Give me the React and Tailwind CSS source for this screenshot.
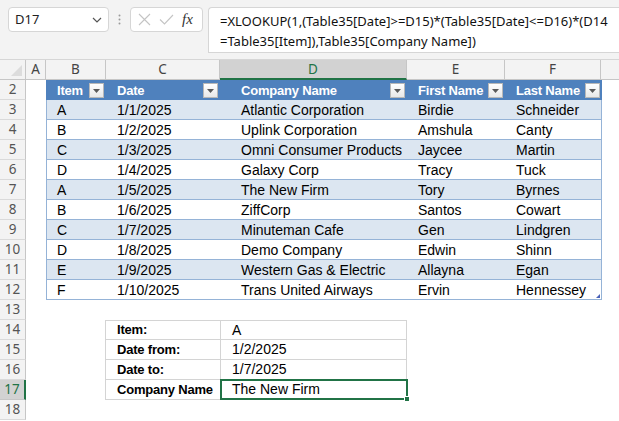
import React from 'react'

const cols = [
  { key: 'A', w: 'w-[20px]' },
  { key: 'B', w: 'w-[60px]' },
  { key: 'C', w: 'w-[114px]' },
  { key: 'D', w: 'w-[187px]' },
  { key: 'E', w: 'w-[98px]' },
  { key: 'F', w: 'w-[96px]' },
]

const data = [
  ['A', '1/1/2025', 'Atlantic Corporation', 'Birdie', 'Schneider'],
  ['B', '1/2/2025', 'Uplink Corporation', 'Amshula', 'Canty'],
  ['C', '1/3/2025', 'Omni Consumer Products', 'Jaycee', 'Martin'],
  ['D', '1/4/2025', 'Galaxy Corp', 'Tracy', 'Tuck'],
  ['A', '1/5/2025', 'The New Firm', 'Tory', 'Byrnes'],
  ['B', '1/6/2025', 'ZiffCorp', 'Santos', 'Cowart'],
  ['C', '1/7/2025', 'Minuteman Cafe', 'Gen', 'Lindgren'],
  ['D', '1/8/2025', 'Demo Company', 'Edwin', 'Shinn'],
  ['E', '1/9/2025', 'Western Gas & Electric', 'Allayna', 'Egan'],
  ['F', '1/10/2025', 'Trans United Airways', 'Ervin', 'Hennessey'],
]

const lookup = [
  ['Item:', 'A'],
  ['Date from:', '1/2/2025'],
  ['Date to:', '1/7/2025'],
  ['Company Name', 'The New Firm'],
]

const FilterBtn = () => (
  <span className="absolute right-[2px] top-[3px] flex h-[15px] w-[15px] items-center justify-center border border-[#b8b8b8] bg-gradient-to-b from-white to-[#e8e8e8]">
    <svg width="7" height="4" viewBox="0 0 7 4"><path d="M0 0h7L3.5 4z" fill="#5a5a5a" /></svg>
  </span>
)

const RowHead = ({ n, active }) => (
  <div
    className={
      'flex h-[20px] w-[26px] shrink-0 items-center justify-center border-b border-r text-[13.5px] ' +
      (active
        ? 'border-b-[#c6c6c6] border-r-[#217346] border-r-2 bg-[#d2d2d2] text-[#217346]'
        : 'border-b-[#dadada] border-r-[#c6c6c6] bg-[#f3f3f3] text-[#555]')
    }
    style={{ fontFamily: '"Noto Sans", sans-serif' }}
  >
    {n}
  </div>
)

export default function App() {
  const cellFont = { fontFamily: '"Liberation Sans", Arial, sans-serif' }
  return (
    <div className="h-[421px] w-[619px] overflow-hidden bg-white text-black" style={cellFont}>
      {/* formula bar */}
      <div className="flex h-[60px] items-start gap-0 border-b border-[#d6d6d6] bg-[#f3f3f3] pt-[7px]">
        <div
          className="ml-[8px] flex h-[25px] w-[101px] items-center justify-between rounded-[4px] border border-[#d6d6d6] bg-white pl-[6px] pr-[6px] text-[13px] text-[#222]"
          style={{ fontFamily: '"Noto Sans", sans-serif' }}
        >
          <span>D17</span>
          <svg width="10" height="6" viewBox="0 0 10 6"><path d="M1 1l4 4 4-4" stroke="#555" strokeWidth="1.2" fill="none" /></svg>
        </div>
        <div className="flex h-[25px] w-[21px] items-center justify-center">
          <svg width="3" height="11" viewBox="0 0 3 11"><circle cx="1.5" cy="1.5" r="1" fill="#9a9a9a" /><circle cx="1.5" cy="5.5" r="1" fill="#9a9a9a" /><circle cx="1.5" cy="9.5" r="1" fill="#9a9a9a" /></svg>
        </div>
        <div className="flex h-[25px] w-[73px] items-center gap-[8px] rounded-[4px] border border-[#d6d6d6] bg-white pl-[7px]">
          <svg width="13" height="13" viewBox="0 0 13 13"><path d="M1 1l11 11M12 1L1 12" stroke="#c4c4c4" strokeWidth="1.1" /></svg>
          <svg width="15" height="11" viewBox="0 0 15 11"><path d="M1 5.5l4.5 4.5L14 1" stroke="#c4c4c4" strokeWidth="1.1" fill="none" /></svg>
          <span className="text-[15px] italic text-[#333]" style={{ fontFamily: '"Liberation Serif", serif' }}>fx</span>
        </div>
        <div
          className="ml-[5px] h-[46px] flex-1 rounded-tl-[4px] border border-r-0 border-[#d6d6d6] bg-white pl-[11px] pt-[3px] text-[13px] leading-[20px] text-[#111]"
          style={{ fontFamily: '"Noto Sans", sans-serif' }}
        >
          <div className="whitespace-nowrap">=XLOOKUP(1,(Table35[Date]&gt;=D15)*(Table35[Date]&lt;=D16)*(D14</div>
          <div className="whitespace-nowrap">=Table35[Item]),Table35[Company Name])</div>
        </div>
      </div>

      {/* column headers */}
      <div className="flex h-[20px]" style={{ fontFamily: '"Noto Sans", sans-serif' }}>
        <div className="relative h-[20px] w-[26px] shrink-0 border-b border-r border-[#c6c6c6] bg-[#f3f3f3]">
          <svg className="absolute bottom-[3px] right-[3px]" width="11" height="11" viewBox="0 0 11 11"><path d="M11 0v11H0z" fill="#dcdcdc" /></svg>
        </div>
        {cols.map((c) => (
          <div
            key={c.key}
            className={
              c.w +
              ' flex h-[20px] shrink-0 items-center justify-center border-r text-[13.5px] ' +
              (c.key === 'D'
                ? 'border-b-2 border-b-[#217346] border-r-[#c6c6c6] bg-[#d2d2d2] text-[#217346]'
                : 'border-b border-[#c6c6c6] bg-[#f3f3f3] text-[#444]')
            }
          >
            {c.key}
          </div>
        ))}
        <div className="h-[20px] flex-1 border-b border-[#c6c6c6] bg-[#f3f3f3]" />
      </div>

      {/* row 2: table header */}
      <div className="flex h-[20px]">
        <RowHead n={2} />
        <div className="w-[20px] shrink-0" />
        <div className="flex w-[556px] shrink-0 bg-[#4f81bd] text-[13px] font-bold tracking-[-0.2px] text-white">
          <div className="relative w-[60px] pl-[11px] leading-[21px]">Item<FilterBtn /></div>
          <div className="relative w-[114px] pl-[11px] leading-[21px]">Date<FilterBtn /></div>
          <div className="relative w-[187px] pl-[21px] leading-[21px]">Company Name<FilterBtn /></div>
          <div className="relative w-[98px] pl-[11px] leading-[21px]">First Name<FilterBtn /></div>
          <div className="relative w-[97px] pl-[11px] leading-[21px]">Last Name<FilterBtn /></div>
        </div>
      </div>

      {/* data rows */}
      {data.map((r, i) => (
        <div key={i} className="flex h-[20px]">
          <RowHead n={i + 3} />
          <div className="w-[20px] shrink-0" />
          <div
            className={
              'relative flex h-[20px] w-[556px] shrink-0 border-r border-[#95b3d7] text-[14px] leading-[20px] ' +
              (i % 2 === 0 ? 'bg-[#dce6f1] ' : 'bg-white ') +
              'border-b border-b-[#95b3d7] border-l'
            }
          >
            <div className="w-[59px] shrink-0 pl-[10px]">{r[0]}</div>
            <div className="w-[114px] shrink-0 pl-[11px]">{r[1]}</div>
            <div className="w-[187px] shrink-0 pl-[21px]">{r[2]}</div>
            <div className="w-[98px] shrink-0 pl-[11px]">{r[3]}</div>
            <div className="w-[96px] shrink-0 pl-[11px]">{r[4]}</div>
            {i === data.length - 1 && (
              <span className="absolute bottom-[1px] right-[1px] h-[4px] w-[4px] bg-[#4a62b8]" style={{ clipPath: 'polygon(100% 0, 100% 100%, 0 100%)' }} />
            )}
          </div>
        </div>
      ))}

      {/* row 13 */}
      <div className="flex h-[20px]">
        <RowHead n={13} />
      </div>

      {/* lookup rows */}
      {lookup.map((r, i) => (
        <div key={i} className="flex h-[20px]">
          <RowHead n={i + 14} active={i === 3} />
          <div className="w-[79px] shrink-0" />
          <div
            className={
              'flex h-[20px] w-[115px] shrink-0 items-center whitespace-nowrap border-b border-l border-[#d4d4d4] pl-[11px] text-[13px] font-bold tracking-[-0.2px] ' +
              (i === 0 ? 'border-t' : '')
            }
          >
            {r[0]}
          </div>
          {i === 3 ? (
            <div className="relative -mt-[1px] flex h-[21px] w-[188px] shrink-0 items-center border-2 border-[#217346] pl-[10px] text-[14px]">
              {r[1]}
              <span className="absolute -bottom-[4px] -right-[4px] h-[6px] w-[6px] border border-white bg-[#217346]" />
            </div>
          ) : (
            <div
              className={
                'flex h-[20px] w-[187px] shrink-0 items-center border-b border-l border-r border-[#d4d4d4] pl-[11px] text-[14px] ' +
                (i === 0 ? 'border-t' : '')
              }
            >
              {r[1]}
            </div>
          )}
        </div>
      ))}

      {/* row 18 */}
      <div className="flex h-[20px]">
        <RowHead n={18} />
      </div>
    </div>
  )
}
